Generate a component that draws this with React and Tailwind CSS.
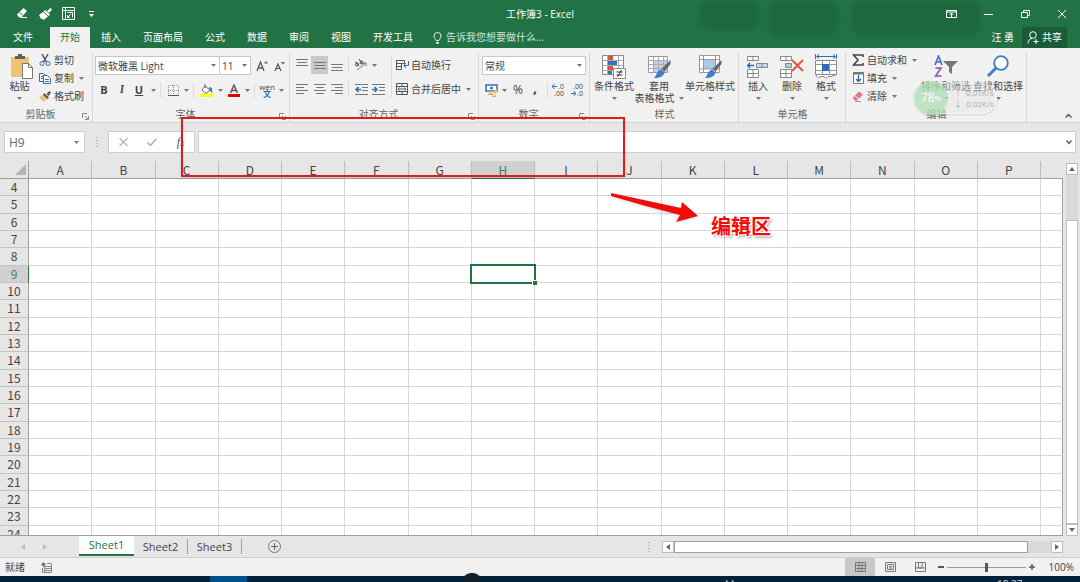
import clsx from "clsx";

const COLUMNS = ["A", "B", "C", "D", "E", "F", "G", "H", "I", "J", "K", "L", "M", "N", "O", "P"];
const ROWS = Array.from({ length: 21 }, (_, i) => i + 4);
const MENU = ["插入", "页面布局", "公式", "数据", "审阅", "视图", "开发工具"];
const SHEETS = ["Sheet1", "Sheet2", "Sheet3"];

/* ---------- small drawing helpers ---------- */

function Svg({ w, h, className, children }) {
  return (
    <svg width={w} height={h} viewBox={`0 0 ${w} ${h}`} fill="none" className={clsx("shrink-0", className)} aria-hidden="true">
      {children}
    </svg>
  );
}

function Caret({ className }) {
  return (
    <Svg w={5} h={3} className={className}>
      <path d="M0 0h5L2.5 3z" fill="#777" />
    </Svg>
  );
}

function Lines({ rows, w = 12 }) {
  return (
    <Svg w={w} h={12}>
      {rows.map(([x, y, len]) => (
        <path key={y} d={`M${x} ${y + 0.5}h${len}`} stroke="#777" />
      ))}
    </Svg>
  );
}

function Launcher() {
  return (
    <button aria-label="更多选项" className="absolute right-1 bottom-[2px]">
      <Svg w={7} h={7}>
        <path d="M.5 5V.5H5M3 3l3 3M6.5 3v3.5H3" stroke="#888" />
      </Svg>
    </button>
  );
}

/* ---------- title bar ---------- */

function TitleBar() {
  return (
    <div className="relative flex h-[27px] shrink-0 items-center justify-between text-white">
      <div className="flex items-center pl-4">
        <button aria-label="橡皮擦" className="flex w-[23px] justify-start">
          <Svg w={13} h={11}>
            <path d="M1 6.500L7.500 0 11 3l-5.500 6.500H3z" fill="#fff" />
            <path d="M3.500 4.500L7 7.500" stroke="#217346" />
            <path d="M5 9.500h6" stroke="#fff" />
          </Svg>
        </button>
        <button aria-label="格式刷" className="flex w-[23px] justify-start">
          <Svg w={13} h={12}>
            <path d="M11.500 0L13 1.500 10 5 8 3z" fill="#fff" />
            <path d="M6 2l5 4.500L9.500 8 4.500 3.500z" fill="#fff" />
            <path d="M4 4l5 4.500L4.500 12 3 10.500 2 11 0 7z" fill="#fff" />
          </Svg>
        </button>
        <button aria-label="快速表格" className="flex w-[27px] justify-start">
          <Svg w={13} h={13}>
            <path d="M.5 .5h12v12H.5zM.5 3.500h12M3.500 .5v12M5.500 5.500h5v5M9 7L5.500 10.500M5.500 8v2.500H8" stroke="#fff" />
          </Svg>
        </button>
        <button aria-label="自定义快速访问工具栏">
          <Svg w={5} h={6}>
            <path d="M0 .5h5" stroke="#fff" />
            <path d="M0 3h5L2.500 6z" fill="#fff" />
          </Svg>
        </button>
      </div>
      <h1 className="pointer-events-none absolute inset-x-0 text-center text-[10px] leading-4">工作簿3 - Excel</h1>
      <div className="flex items-center">
        <button aria-label="功能区显示选项" className="flex w-[37px] justify-center">
          <Svg w={11} h={8}>
            <path d="M.5 .5h10v7H.5zM.5 2h10M5.500 7V3.500M3.500 5l2-2 2 2" stroke="#fff" />
          </Svg>
        </button>
        <button aria-label="最小化" className="flex w-[37px] justify-center">
          <Svg w={9} h={8}>
            <path d="M0 4.500h9" stroke="#fff" />
          </Svg>
        </button>
        <button aria-label="还原" className="flex w-[37px] justify-center">
          <Svg w={9} h={8}>
            <path d="M.5 2.500h6v5h-6zM2.500 2.500V.5h6v5h-2" stroke="#fff" />
          </Svg>
        </button>
        <button aria-label="关闭" className="flex w-9 justify-center">
          <Svg w={8} h={8}>
            <path d="M0 0l8 8M8 0L0 8" stroke="#fff" />
          </Svg>
        </button>
      </div>
    </div>
  );
}

function MenuTabs() {
  return (
    <div className="relative flex h-[21px] shrink-0 items-stretch text-[10px] text-white">
      <button className="ml-3 w-[22px]">文件</button>
      <button className="ml-4 w-10 bg-[#f1f1f1] text-[#217346]">开始</button>
      <nav className="ml-[11px] flex gap-[22px]">
        {MENU.map((m) => (
          <button key={m} className="whitespace-nowrap">{m}</button>
        ))}
      </nav>
      <label className="ml-5 flex items-center gap-1">
        <Svg w={9} h={12}>
          <path d="M3 8.500C3 7 1 6.500 1 4a3.500 3.500 0 017 0c0 2.500-2 3-2 4.500zM3 10.500h3M3.500 11.500h2" stroke="#e3efe8" />
        </Svg>
        <input
          aria-label="告诉我您想要做什么"
          placeholder="告诉我您想要做什么..."
          className="w-32 bg-transparent outline-none placeholder:text-[#cfe3d7]"
        />
      </label>
      <div className="ml-auto flex">
        <button className="px-2">汪 勇</button>
        <button className="mr-[13px] flex w-[45px] items-center justify-center gap-[3px] bg-[#1a5c38]">
          <Svg w={12} h={13}>
            <circle cx="6" cy="4" r="3.300" stroke="#fff" />
            <path d="M1 12.500C1 9.500 3 7.500 5 7.500M6.500 10.500h5M9 8v5" stroke="#fff" />
          </Svg>
          共享
        </button>
      </div>
    </div>
  );
}

/* ---------- ribbon ---------- */

function Group({ label, className, launcher, children }) {
  return (
    <section
      aria-label={label}
      className={clsx("relative flex shrink-0 flex-col after:absolute after:top-1 after:right-0 after:bottom-0 after:w-px after:bg-[#d8d8d8]", className)}
    >
      <div className="h-[58px]">{children}</div>
      <p className="h-4 text-center text-[10px] leading-4 text-[#666]">{label}</p>
      {launcher && <Launcher />}
    </section>
  );
}

function Divider({ className }) {
  return <span className={clsx("w-px shrink-0 bg-[#dcdcdc]", className || "h-4")} />;
}

// icon button in a fixed slot, so rows of them share one rhythm
function Tool({ label, className, children }) {
  return (
    <button aria-label={label} className={clsx("flex h-[18px] shrink-0 items-center justify-center", className || "w-[18px]")}>
      {children}
    </button>
  );
}

function TextTool({ icon, children, caret }) {
  return (
    <button className="flex h-[18px] items-center gap-[3px] whitespace-nowrap">
      <span className="flex w-3 justify-center">{icon}</span>
      {children}
      {caret && <Caret className="ml-[2px]" />}
    </button>
  );
}

function BigTool({ icon, lines, className, caret = "below" }) {
  return (
    <button className={clsx("flex shrink-0 flex-col items-center whitespace-nowrap", className)}>
      <span className="flex h-[25px] items-center">{icon}</span>
      <span className="mt-px leading-3">{lines[0]}</span>
      {caret === "below" ? (
        <Caret className="mt-[5px]" />
      ) : (
        <span className="flex items-center gap-1 leading-3">
          {lines[1]}
          <Caret />
        </span>
      )}
    </button>
  );
}

function Combo({ label, value, className }) {
  return (
    <span className={clsx("relative flex h-[19px] shrink-0 items-center", className)}>
      <select
        aria-label={label}
        defaultValue={value}
        className="h-full w-full appearance-none border border-[#c6c6c6] bg-white pl-[2px] text-[10px] leading-4 text-[#444] outline-none"
      >
        <option>{value}</option>
      </select>
      <Caret className="pointer-events-none absolute right-1" />
    </span>
  );
}

function Clipboard() {
  return (
    <Group label="剪贴板" className="w-[93px] [&>p]:pr-3" launcher>
      <div className="flex">
        <BigTool
          className="w-[39px] pt-[6px]"
          lines={["粘贴"]}
          icon={
            <Svg w={24} h={25} className="ml-1">
              <path d="M1 3h18v20H1z" fill="#eec173" />
              <path d="M5 5V2h3V0h4v2h3v3z" fill="#5f5f5f" />
              <path d="M12.500 9.500h6l4 4v11h-10z" fill="#fff" stroke="#777" />
              <path d="M18.500 9.500v4h4" stroke="#777" />
            </Svg>
          }
        />
        <div className="flex flex-col pt-[3px]">
          <TextTool
            icon={
              <Svg w={12} h={12}>
                <path d="M3 0l4.500 8M9 0L4.500 8" stroke="#555" strokeWidth="1.500" />
                <circle cx="3" cy="9.500" r="2" stroke="#2e6db4" />
                <circle cx="9" cy="9.500" r="2" stroke="#2e6db4" />
              </Svg>
            }
          >
            剪切
          </TextTool>
          <TextTool
            caret
            icon={
              <Svg w={12} h={11}>
                <path d="M.5 .5h4l2 2v6h-6zM2 3.500h2M2 5.500h2" stroke="#2e6db4" />
                <path d="M4.500 2.500h4l3 3v5h-7z" fill="#fff" stroke="#2e6db4" />
                <path d="M6 6.500h4M6 8.500h4" stroke="#2e6db4" />
              </Svg>
            }
          >
            复制
          </TextTool>
          <TextTool
            icon={
              <Svg w={12} h={11}>
                <path d="M3.500 4L8 8 4.500 11 0 6z" fill="#eec173" />
                <path d="M5 2l5 4.500L8.500 8 4 4z" fill="#555" />
                <path d="M10.500 0L12 1.500 9.500 5 7.500 3z" fill="#555" />
              </Svg>
            }
          >
            格式刷
          </TextTool>
        </div>
      </div>
    </Group>
  );
}

function FontGroup() {
  return (
    <Group label="字体" className="w-[197px] [&>p]:pr-3" launcher>
      <div className="flex items-center pt-2 pl-[2px]">
        <Combo label="字体" value="微软雅黑 Light" className="w-[125px]" />
        <Combo label="字号" value="11" className="-ml-px w-8" />
        <Tool label="增大字号" className="ml-[2px] w-[18px]">
          <Svg w={12} h={12}>
            <path d="M1 11L4.500 2 8 11M2.500 8h4" stroke="#555" strokeWidth="1.300" />
            <path d="M8 3.500h4L10 1z" fill="#2e6db4" />
          </Svg>
        </Tool>
        <Tool label="减小字号">
          <Svg w={12} h={12}>
            <path d="M1 11l3-7 3 7M2 8.500h4" stroke="#555" strokeWidth="1.200" />
            <path d="M7 2h4L9 4.500z" fill="#2e6db4" />
          </Svg>
        </Tool>
      </div>
      <div className="flex items-center pt-[6px] pl-[2px] text-[11px] text-[#444]">
        <Tool label="加粗"><b>B</b></Tool>
        <Tool label="倾斜"><i className="font-serif font-bold">I</i></Tool>
        <Tool label="下划线" className="w-4"><b className="underline">U</b></Tool>
        <Caret className="mx-1" />
        <Divider />
        <Tool label="边框" className="ml-px w-[22px]">
          <Svg w={11} h={11}>
            <path d="M.5 0v11M5.500 0v11M10.500 0v11M0 .5h11M0 5.500h11" stroke="#999" strokeDasharray="1 1" />
            <path d="M0 10.500h11" stroke="#555" />
          </Svg>
        </Tool>
        <Caret className="mr-1" />
        <Divider />
        <Tool label="填充颜色" className="w-6">
          <Svg w={13} h={13}>
            <path d="M5 2l5 4-4 3.500L2 6z" fill="#fff" stroke="#666" />
            <path d="M5 4V0" stroke="#666" />
            <path d="M9 3c3 0 4 3 2.500 6L10 6z" fill="#2e6db4" />
            <path d="M0 10h13v3H0z" fill="#ffff00" />
          </Svg>
        </Tool>
        <Caret />
        <Tool label="字体颜色" className="w-[22px]">
          <Svg w={12} h={13}>
            <path d="M2.500 9L6 1l3.500 8M4 6.500h4" stroke="#555" strokeWidth="1.400" />
            <path d="M0 10h12v3H0z" fill="#e00000" />
          </Svg>
        </Tool>
        <Caret className="mr-1" />
        <Divider />
        <Tool label="拼音指南" className="w-6">
          <span className="flex flex-col items-center text-[8px] leading-[6px]">
            wén
            <span className="leading-[7px] font-bold text-[#2e6db4]">文</span>
          </span>
        </Tool>
        <Caret />
      </div>
    </Group>
  );
}

const full = (y) => [0, y, 12];

function AlignGroup() {
  return (
    <Group label="对齐方式" className="w-[189px] [&>p]:pr-3" launcher>
      <div className="flex">
        <div className="flex flex-col gap-[6px] pt-2 pl-[3px]">
          <div className="flex items-center">
            <Tool label="顶端对齐"><Lines rows={[full(0), [1, 3, 10], full(6)]} /></Tool>
            <Tool label="垂直居中" className="w-[17px] bg-[#c9c9c9]"><Lines rows={[full(3), [1, 6, 10], full(9)]} /></Tool>
            <Tool label="底端对齐"><Lines rows={[full(5), [1, 8, 10], full(11)]} /></Tool>
            <Divider className="ml-[2px] h-4" />
            <Tool label="方向" className="w-[23px]">
              <Svg w={13} h={12}>
                <path d="M3 11l9-7M9 4h3v3" stroke="#777" />
                <circle cx="3" cy="5.500" r="1.500" stroke="#444" />
                <path d="M1.500 2.500l3 4M5 0l3.500 5" stroke="#444" />
                <circle cx="7.500" cy="3.500" r="1.500" stroke="#444" />
              </Svg>
            </Tool>
            <Caret />
          </div>
          <div className="flex items-center">
            <Tool label="左对齐"><Lines rows={[full(1), [0, 4, 8], full(7), [0, 10, 8]]} /></Tool>
            <Tool label="居中" className="w-[17px]"><Lines rows={[full(1), [2, 4, 8], full(7), [2, 10, 8]]} /></Tool>
            <Tool label="右对齐"><Lines rows={[full(1), [4, 4, 8], full(7), [4, 10, 8]]} /></Tool>
            <Divider className="ml-[2px] h-4" />
            <Tool label="减少缩进量" className="ml-[3px] w-[18px]">
              <Svg w={13} h={11}>
                <path d="M0 .5h13M7 3.500h6M7 6.500h6M0 10.500h13" stroke="#777" />
                <path d="M1 5.500h5M3.500 3L1 5.500 3.500 8" stroke="#2e6db4" strokeWidth="1.500" />
              </Svg>
            </Tool>
            <Tool label="增加缩进量" className="w-[17px]">
              <Svg w={13} h={11}>
                <path d="M0 .5h13M7 3.500h6M7 6.500h6M0 10.500h13" stroke="#777" />
                <path d="M0 5.500h5M2.500 3L5 5.500 2.500 8" stroke="#2e6db4" strokeWidth="1.500" />
              </Svg>
            </Tool>
          </div>
        </div>
        <Divider className="mx-1 mt-2 h-[42px]" />
        <div className="flex flex-col gap-[6px] pt-2">
          <TextTool
            icon={
              <Svg w={13} h={12}>
                <path d="M.5 1v10M.5 1.500h8v3h-8M.5 7.500h5M.5 10.500h5V5" stroke="#555" />
                <path d="M12.500 2v4.500H8M10 4L8 6.500l2 2.500" stroke="#2e6db4" />
              </Svg>
            }
          >
            自动换行
          </TextTool>
          <TextTool
            caret
            icon={
              <Svg w={12} h={12}>
                <path d="M.5 .5h11v11H.5zM.5 3.500h11M.5 8.500h11M6 .5v3M6 8.500v3" stroke="#555" />
                <path d="M2 6h8M3.500 4.500L2 6l1.500 1.500M8.500 4.500L10 6 8.500 7.500" stroke="#2e6db4" />
              </Svg>
            }
          >
            合并后居中
          </TextTool>
        </div>
      </div>
    </Group>
  );
}

function Decimal({ top, bottom, flip }) {
  return (
    <span className="relative flex flex-col items-end text-[7px] leading-[7px]">
      <span>{top}</span>
      <span>{bottom}</span>
      <Svg w={5} h={5} className={clsx("absolute", flip ? "bottom-[1px] -left-[2px] rotate-180" : "top-[1px] -left-[2px]")}>
        <path d="M0 2.500h5M2.500 0L0 2.500 2.500 5" stroke="#2e6db4" />
      </Svg>
    </span>
  );
}

function NumberGroup() {
  return (
    <Group label="数字" className="w-[111px] [&>p]:pr-3" launcher>
      <div className="pt-2 pl-[3px]">
        <Combo label="数字格式" value="常规" className="w-[104px]" />
      </div>
      <div className="flex items-center pt-[6px] pl-[3px] text-[#444]">
        <Tool label="会计数字格式">
          <Svg w={13} h={13}>
            <path d="M1 1h11v6H1z" fill="#fff" stroke="#2e6db4" strokeWidth="1.500" />
            <circle cx="6.500" cy="4" r="1.500" fill="#2e6db4" />
            <path d="M4 7h5v1.500H4zM3 9.500h5V11H3zM7 11.500h4V13H7z" fill="#e2a548" />
            <path d="M9 7l3-2v3l-2 3z" fill="#eec173" />
          </Svg>
        </Tool>
        <Caret className="mx-[2px]" />
        <Tool label="百分比样式"><span className="text-[12px]">%</span></Tool>
        <Tool label="千位分隔样式" className="w-4"><b className="-mt-[6px] text-[14px]">,</b></Tool>
        <Divider className="ml-1 h-4" />
        <Tool label="增加小数位数" className="w-[22px]"><Decimal top=".0" bottom=".00" /></Tool>
        <Tool label="减少小数位数" className="w-4"><Decimal top=".00" bottom=".0" flip /></Tool>
      </div>
    </Group>
  );
}

function Brush() {
  return (
    <>
      <path d="M22.500 5v4l-6 7.500-3-2.500z" fill="#666" />
      <path d="M13 14.500l3.500 3c-1 4-4.500 5.500-10.500 5.500 3-2 2-7 7-8.500z" fill="#3f7fc1" />
    </>
  );
}

function StylesGroup() {
  return (
    <Group label="样式" className="w-[149px]">
      <div className="flex pt-[6px] pl-[3px]">
        <BigTool
          className="w-[42px]"
          lines={["条件格式"]}
          icon={
            <Svg w={24} h={24}>
              <path d="M.5 .5h21v19H.5z" fill="#fff" stroke="#888" />
              <path d="M6 1h5v4H6zM6 11h5v4H6z" fill="#d9573c" />
              <path d="M6 6h9v4H6zM6 16h4v3H6z" fill="#3b6fb5" />
              <path d="M.5 5.500h21M.5 10.500h21M.5 15.500h21M5.500 .5v19M16.500 .5v19" stroke="#aaa" />
              <path d="M11.500 13.500h12v10h-12z" fill="#fff" stroke="#888" />
              <path d="M14.500 17h6M14.500 20h6M19.500 15l-4 7" stroke="#333" />
            </Svg>
          }
        />
        <BigTool
          className="ml-px w-[46px]"
          lines={["套用", "表格格式"]}
          caret="inline"
          icon={
            <Svg w={23} h={23}>
              <path d="M.5 1.500h19v16H.5z" fill="#fff" stroke="#999" />
              <path d="M5 6h14v11H5z" fill="#bdd0ee" />
              <path d="M.5 5.500h19M.5 9.500h19M.5 13.500h19M5.500 1.500v16M10.500 1.500v16M15.500 1.500v16" stroke="#aaa" />
              <Brush />
            </Svg>
          }
        />
        <BigTool
          className="ml-[2px] w-[52px]"
          lines={["单元格样式"]}
          icon={
            <Svg w={23} h={24}>
              <path d="M.5 .5h20v17H.5z" fill="#fff" stroke="#999" />
              <path d="M4 5h13v9H4z" fill="#a9c9e8" />
              <path d="M.5 4.500h20M.5 14h20M4.500 .5v17M16.500 .5v17" stroke="#999" />
              <Brush />
            </Svg>
          }
        />
      </div>
    </Group>
  );
}

function CellsGroup() {
  return (
    <Group label="单元格" className="w-[107px]">
      <div className="flex pt-[6px] pl-[2px]">
        <BigTool
          className="w-[34px]"
          lines={["插入"]}
          icon={
            <Svg w={22} h={24}>
              <path d="M.5 1.500h11v4H.5zM6 1.500v4M.5 14.500h11v8H.5zM6 14.500v8M.5 18.500h11" fill="#fff" stroke="#888" />
              <path d="M9.500 8.500h11v4h-11zM15 8.500v4" fill="#c4d7ee" stroke="#888" />
              <path d="M0 10.500h7M3 8l-2.500 2.500L3 13" stroke="#2e6db4" strokeWidth="1.500" />
            </Svg>
          }
        />
        <BigTool
          className="w-[34px]"
          lines={["删除"]}
          icon={
            <Svg w={24} h={24}>
              <path d="M.5 1.500h11v4H.5zM6 1.500v4M.5 14.500h11v8H.5zM6 14.500v8M.5 18.500h11" fill="#fff" stroke="#888" />
              <path d="M5.500 8.500h6v4h-6z" fill="#a9d0dc" stroke="#888" />
              <path d="M12 5l11 11M23 5L12 16" stroke="#dc5a41" strokeWidth="2" />
            </Svg>
          }
        />
        <BigTool
          className="w-[34px]"
          lines={["格式"]}
          icon={
            <Svg w={23} h={25}>
              <path d="M2 2.500h18M4 .5L1.500 2.500 4 4.500M18 .5l2.500 2L18 4.500M.5 0v5M21.500 0v5" stroke="#2e6db4" />
              <path d="M.5 6.500h21v14H.5zM1 20.500c1 4 4 4 4 2h4c0 2 4 2 4 0h4c0-1 4-1 4-2z" fill="#fff" stroke="#888" />
              <path d="M.5 10.500h21M.5 16.500h21M7.500 6.500v14M14.500 6.500v14" stroke="#999" />
              <path d="M7 10h7v7H7z" fill="#2e6db4" />
            </Svg>
          }
        />
      </div>
    </Group>
  );
}

function EditGroup() {
  return (
    <Group label="编辑" className="w-[181px]">
      <div className="flex">
        <div className="flex flex-col pt-[3px] pl-[6px]">
          <TextTool
            caret
            icon={
              <Svg w={12} h={12}>
                <path d="M11 3V1H1.500L6 6l-4.500 5H11V9" stroke="#444" strokeWidth="1.600" />
              </Svg>
            }
          >
            自动求和
          </TextTool>
          <TextTool
            caret
            icon={
              <Svg w={11} h={12}>
                <path d="M.5 .5h10v11H.5z" fill="#fff" stroke="#777" />
                <path d="M0 .5h11v2H0z" fill="#777" />
                <path d="M5.500 3v7M3 7l2.500 2.500L8 7" stroke="#2e6db4" strokeWidth="1.500" />
              </Svg>
            }
          >
            填充
          </TextTool>
          <TextTool
            caret
            icon={
              <Svg w={12} h={11}>
                <path d="M1 6.500l6-6 4 3-6 6H2.500z" fill="#e8718a" />
                <path d="M3 5l4 3" stroke="#fff" />
                <path d="M3 10.500h6" stroke="#999" />
              </Svg>
            }
          >
            清除
          </TextTool>
        </div>
        <BigTool
          className="ml-[3px] w-[52px] pt-[6px]"
          lines={["排序和筛选"]}
          icon={
            <Svg w={24} h={23}>
              <path d="M1 10L4.500 1 8 10M2 7h5" stroke="#3b6fc5" strokeWidth="1.600" />
              <path d="M1.500 13h5.500L1.500 21h6" stroke="#9b4fb0" strokeWidth="1.600" />
              <path d="M9 6h15l-6 6v7l-3-2v-5z" fill="#777" />
            </Svg>
          }
        />
        <BigTool
          className="w-[52px] pt-[6px]"
          lines={["查找和选择"]}
          icon={
            <Svg w={22} h={23}>
              <circle cx="14" cy="8" r="6.800" fill="#fff" stroke="#3f7fc1" strokeWidth="1.800" />
              <path d="M9 13l-8 8" stroke="#3f7fc1" strokeWidth="3" />
            </Svg>
          }
        />
      </div>
    </Group>
  );
}

// floating network speed ball lying over the ribbon
function SpeedBall() {
  return (
    <div className="pointer-events-none absolute top-[34px] left-[914px] flex items-center">
      <div className="flex h-8 w-[83px] flex-col justify-center rounded-full border border-white/50 bg-[#e6e6e6]/40 pl-[39px] text-[8px] leading-[11px] text-[#aaa] shadow-sm">
        <span className="whitespace-nowrap"><span className="mr-1 text-[#e9a9a0]">↑</span>0.01K/s</span>
        <span className="whitespace-nowrap"><span className="mr-1 text-[#8fc79a]">↓</span>0.02K/s</span>
      </div>
      <span className="absolute left-0 flex size-[34px] items-center justify-center rounded-full bg-[#a5dfae]/65 text-[12px] text-white">
        78<span className="text-[8px]">%</span>
      </span>
    </div>
  );
}

function Ribbon() {
  return (
    <div className="relative flex h-[75px] shrink-0 border-b border-[#d2d2d2] bg-[#f1f1f1] text-[10px] text-[#444]">
      <Clipboard />
      <FontGroup />
      <AlignGroup />
      <NumberGroup />
      <StylesGroup />
      <CellsGroup />
      <EditGroup />
      <button aria-label="折叠功能区" className="mt-auto mr-2 mb-1 ml-auto">
        <Svg w={7} h={5}>
          <path d="M.5 4.500l3-3 3 3" stroke="#555" strokeWidth="1.500" />
        </Svg>
      </button>
      <SpeedBall />
    </div>
  );
}

/* ---------- formula bar ---------- */

function Dots() {
  return (
    <Svg w={2} h={10}>
      <path d="M1 0v10" stroke="#999" strokeDasharray="1 2" />
    </Svg>
  );
}

function FormulaBar() {
  return (
    <div className="flex h-[38px] shrink-0 items-start bg-[#e6e6e6] pt-2 pr-1 pl-1">
      <span className="relative flex h-[22px] items-center">
        <input
          aria-label="名称框"
          defaultValue="H9"
          className="h-full w-[81px] border border-[#cfcfcf] bg-white pl-1 text-[12px] text-[#666] outline-none"
        />
        <Caret className="absolute right-[6px]" />
      </span>
      <span className="flex h-[22px] w-[23px] items-center justify-center"><Dots /></span>
      <div className="flex h-[22px] w-[87px] items-center justify-around border border-[#cfcfcf] bg-white">
        <button aria-label="取消">
          <Svg w={9} h={8}><path d="M.5 0l8 8M8.500 0l-8 8" stroke="#b5b5b5" strokeWidth="1.300" /></Svg>
        </button>
        <button aria-label="输入">
          <Svg w={10} h={8}><path d="M.5 4.500l3 3 6-7" stroke="#b5b5b5" strokeWidth="1.600" /></Svg>
        </button>
        <button aria-label="插入函数" className="font-['Liberation_Serif',serif] text-[12px] text-[#555] italic">
          f<span className="text-[9px]">x</span>
        </button>
      </div>
      <span className="relative ml-[3px] flex h-[22px] flex-1 items-center">
        <input aria-label="编辑栏" className="h-full w-full border border-[#cfcfcf] bg-white px-1 text-[12px] outline-none" />
        <Svg w={6} h={5} className="absolute right-1">
          <path d="M.5 .5L3 3.500 5.500 .5" stroke="#555" strokeWidth="1.300" />
        </Svg>
      </span>
    </div>
  );
}

/* ---------- sheet ---------- */

function Grid() {
  return (
    <div className="min-w-0 flex-1 overflow-hidden border-b border-[#9f9f9f]">
      <table className="h-[calc(100%+8px)] w-full table-fixed border-separate border-spacing-0 font-['Noto_Sans_CJK_SC',sans-serif] text-[12px] text-[#444]">
        <thead>
          <tr>
            <th className="w-[29px] border-r border-b border-[#9f9f9f] bg-[#e6e6e6] p-0 leading-4">
              <Svg w={11} h={11} className="mr-[2px] ml-auto">
                <path d="M11 0v11H0z" fill="#b4b4b4" />
              </Svg>
            </th>
            {COLUMNS.map((c) => (
              <th
                key={c}
                scope="col"
                className={clsx(
                  "h-[18px] border-r border-b p-0 leading-4 font-normal",
                  c === "H" ? "border-r-[#bdbdbd] border-b-[#217346] bg-[#d0d0d0] text-[#4c7a60]" : "border-r-[#bdbdbd] border-b-[#9f9f9f] bg-[#e6e6e6]"
                )}
              >
                {c}
              </th>
            ))}
            <th className="w-[22px] border-b border-[#9f9f9f] bg-[#e6e6e6] p-0" />
          </tr>
        </thead>
        <tbody>
          {ROWS.map((r) => (
            <tr key={r}>
              <th
                scope="row"
                className={clsx(
                  "border-r border-b border-b-[#c4c4c4] p-0 leading-4 font-normal",
                  r === 9 ? "border-r-[#217346] bg-[#d0d0d0] text-[#4c7a60]" : "border-r-[#9f9f9f] bg-[#e6e6e6]"
                )}
              >
                {r}
              </th>
              {COLUMNS.map((c) => (
                <td key={c} className="relative border-r border-b border-[#d6d6d6] bg-white p-0">
                  {r === 9 && c === "H" && (
                    <span className="absolute -inset-[2px] z-10 border-2 border-[#217346]">
                      <span className="absolute -right-[3px] -bottom-[3px] size-[5px] border-t border-l border-white bg-[#217346]" />
                    </span>
                  )}
                </td>
              ))}
              <td className="border-r border-b border-[#d6d6d6] border-r-[#9f9f9f] bg-white p-0" />
            </tr>
          ))}
        </tbody>
      </table>
    </div>
  );
}

function ScrollButton({ label, d, className }) {
  return (
    <button aria-label={label} className={clsx("flex size-3 shrink-0 items-center justify-center border border-[#bdbdbd] bg-white", className)}>
      <Svg w={6} h={6}>
        <path d={d} fill="#666" />
      </Svg>
    </button>
  );
}

function VerticalScroll() {
  return (
    <div className="flex w-[17px] shrink-0 flex-col items-center bg-[#e6e6e6] pt-[2px]">
      <ScrollButton label="向上滚动" d="M0 5h6L3 1z" />
      <div className="flex w-3 flex-1 flex-col bg-[#dadada]">
        <div className="mt-auto h-[87%] border border-[#bdbdbd] bg-white" />
      </div>
      <ScrollButton label="向下滚动" d="M0 1h6L3 5z" />
    </div>
  );
}

function SheetTabs() {
  return (
    <div className="flex h-[22px] shrink-0 items-start border-b border-[#cfcfcf] bg-[#e6e6e6] text-[11px] text-[#444]">
      <div className="flex w-[79px] items-center gap-[18px] self-center pl-[21px]">
        <button aria-label="上一个工作表"><Svg w={4} h={6}><path d="M4 0v6L0 3z" fill="#bdbdbd" /></Svg></button>
        <button aria-label="下一个工作表"><Svg w={4} h={6}><path d="M0 0v6l4-3z" fill="#bdbdbd" /></Svg></button>
      </div>
      {SHEETS.map((s, i) => (
        <button
          key={s}
          className={clsx(
            "shrink-0 leading-4",
            i === 0 ? "h-5 w-[55px] border-b-2 border-[#217346] bg-white text-[#217346]" : "mt-[3px] h-[15px] w-[54px] border-r border-[#9f9f9f] pb-px leading-3"
          )}
        >
          {s}
        </button>
      ))}
      <button aria-label="新工作表" className="ml-[26px] self-center">
        <Svg w={13} h={13}>
          <circle cx="6.500" cy="6.500" r="6" stroke="#777" />
          <path d="M6.500 3v7M3 6.500h7" stroke="#666" />
        </Svg>
      </button>
      <div className="ml-auto flex w-[40%] items-center self-center pr-[17px]">
        <Dots />
        <ScrollButton label="向左滚动" d="M5 0v6L1 3z" className="ml-3" />
        <div className="flex h-3 flex-1 bg-[#dadada]">
          <div className="w-[94%] border border-[#9f9f9f] bg-white" />
        </div>
        <ScrollButton label="向右滚动" d="M1 0v6l4-3z" />
      </div>
    </div>
  );
}

function StatusBar() {
  return (
    <div className="flex h-[18px] shrink-0 items-center bg-[#f1f1f1] text-[10px] text-[#444]">
      <span className="pl-[5px]">就绪</span>
      <button aria-label="录制宏" className="ml-4">
        <Svg w={11} h={11}>
          <path d="M3.500 4.500h7v6h-7zM4 6.500h6M4 8.500h6M6 1.500h4.500v3" stroke="#888" />
          <circle cx="2.500" cy="2.500" r="2" fill="#777" />
          <path d="M1.500 6v4.500h2" stroke="#888" />
        </Svg>
      </button>
      <div className="ml-auto flex h-full items-center">
        <button aria-label="普通" className="flex h-full w-[30px] items-center justify-center bg-[#c9c9c9]">
          <Svg w={11} h={10}><path d="M.5 .5h10v9H.5zM.5 3.500h10M.5 6.500h10M4 .5v9M7 .5v9" stroke="#777" /></Svg>
        </button>
        <button aria-label="页面布局" className="flex w-[30px] justify-center">
          <Svg w={11} h={10}><path d="M.5 .5h10v9H.5zM2.500 2.500h6v5h-6zM4 4.500h3M4 6h3" stroke="#777" /></Svg>
        </button>
        <button aria-label="分页预览" className="flex w-[30px] justify-center">
          <Svg w={11} h={10}><path d="M.5 .5h10v9H.5zM3.500 .5v5.500h3.500V.5M.5 6h10" stroke="#777" /></Svg>
        </button>
        <button aria-label="缩小" className="ml-[3px]"><Svg w={6} h={6}><path d="M0 3h6" stroke="#555" strokeWidth="2" /></Svg></button>
        <input
          type="range"
          aria-label="缩放"
          defaultValue="50"
          className="mx-[3px] h-3 w-[79px] appearance-none bg-transparent bg-[linear-gradient(#999,#999)] bg-[length:100%_1px] bg-center bg-no-repeat [&::-webkit-slider-thumb]:h-[9px] [&::-webkit-slider-thumb]:w-[3px] [&::-webkit-slider-thumb]:appearance-none [&::-webkit-slider-thumb]:bg-[#555]"
        />
        <button aria-label="放大"><Svg w={6} h={6}><path d="M0 3h6M3 0v6" stroke="#555" strokeWidth="1.500" /></Svg></button>
        <span className="w-[45px] pr-[6px] text-right">100%</span>
      </div>
    </div>
  );
}

function Taskbar() {
  return (
    <div className="relative h-[6px] shrink-0 bg-[#00213a]">
      <span className="absolute left-[210px] h-full w-[37px] bg-[#00508c]" />
      <span className="absolute -top-[3px] left-[462px] h-[9px] w-5 rounded-t-full bg-[#10202c]" />
      <div className="absolute inset-0 overflow-hidden text-[10px] leading-3 text-[#cfd6db]">
        <span className="absolute top-[2px] left-[724px]">^^</span>
        <time className="absolute top-[2px] left-[997px]">18:27</time>
      </div>
    </div>
  );
}

/* ---------- red teaching marks over the window ---------- */

function Callout() {
  return (
    <div className="pointer-events-none absolute top-[117px] left-[181px] z-20">
      <div className="h-[60px] w-[444px] border-2 border-[#e3191b] shadow" />
      <svg width="92" height="34" viewBox="0 0 92 34" className="absolute top-[74px] left-[428px] drop-shadow" aria-hidden="true">
        <path d="M2 2L72 17l1-6 16 14-22 6 4-7Q35 15 2 5z" fill="#f50a0a" />
      </svg>
      <strong className="absolute top-24 left-[530px] text-[20px] leading-7 whitespace-nowrap text-[#f50a0a] [text-shadow:1px_1px_0_#fff,-1px_-1px_0_#fff,1px_-1px_0_#fff,-1px_1px_0_#fff,2px_2px_3px_#888]">
        编辑区
      </strong>
    </div>
  );
}

export default function App() {
  return (
    <div className="relative flex h-screen flex-col overflow-hidden bg-[#217346] font-['Open_Sans','Noto_Sans_CJK_SC',sans-serif]">
      <header className="relative shrink-0">
        <div className="absolute top-0 right-[320px] h-[30px] w-[60px] rounded-xl bg-[#1e683e] blur-[2px]" />
        <div className="absolute top-0 right-[242px] h-9 w-[70px] rounded-xl bg-[#1e683e] blur-[2px]" />
        <div className="absolute top-0 right-[100px] h-9 w-[128px] rounded-xl bg-[#1e683e] blur-[2px]" />
        <TitleBar />
        <MenuTabs />
      </header>
      <Ribbon />
      <FormulaBar />
      <main className="flex min-h-0 flex-1">
        <Grid />
        <VerticalScroll />
      </main>
      <SheetTabs />
      <StatusBar />
      <Taskbar />
      <Callout />
    </div>
  );
}
